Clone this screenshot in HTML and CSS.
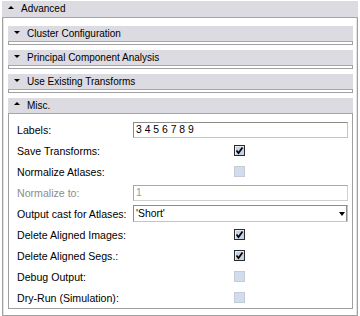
FILE: index.html
```html
<!DOCTYPE html>
<html>
<head>
<meta charset="utf-8">
<link rel="stylesheet" href="styles.css">
</head>
<body>
<div class="section outer">
  <div class="hdr"><span class="tri up"></span><span>Advanced</span></div>
  <div class="outer-body">
    <div class="sub">
      <div class="hdr sub-hdr"><span class="tri down"></span><span>Cluster Configuration</span></div>
      <div class="collapsed"></div>
    </div>
    <div class="sub">
      <div class="hdr sub-hdr"><span class="tri down"></span><span>Principal Component Analysis</span></div>
      <div class="collapsed"></div>
    </div>
    <div class="sub">
      <div class="hdr sub-hdr"><span class="tri down"></span><span>Use Existing Transforms</span></div>
      <div class="collapsed"></div>
    </div>
    <div class="sub last">
      <div class="hdr sub-hdr"><span class="tri up"></span><span>Misc.</span></div>
      <div class="misc-body">
        <div class="row"><span class="lbl">Labels:</span><div class="ctl"><div class="input">3 4 5 6 7 8 9</div></div></div>
        <div class="row"><span class="lbl">Save Transforms:</span><div class="ctl center"><span class="cb checked"><svg viewBox="0 0 11 11" width="11" height="11"><path d="M2.5 5.5 L4.5 8 L8.5 2.5" fill="none" stroke="#000" stroke-width="1.7"/></svg></span></div></div>
        <div class="row"><span class="lbl">Normalize Atlases:</span><div class="ctl center"><span class="cb off"></span></div></div>
        <div class="row"><span class="lbl dis">Normalize to:</span><div class="ctl"><div class="input disabled">1</div></div></div>
        <div class="row"><span class="lbl">Output cast for Atlases:</span><div class="ctl"><div class="select"><span class="sel-val">'Short'</span><span class="sel-btn"><span class="tri down small"></span></span></div></div></div>
        <div class="row"><span class="lbl">Delete Aligned Images:</span><div class="ctl center"><span class="cb checked"><svg viewBox="0 0 11 11" width="11" height="11"><path d="M2.5 5.5 L4.5 8 L8.5 2.5" fill="none" stroke="#000" stroke-width="1.7"/></svg></span></div></div>
        <div class="row"><span class="lbl">Delete Aligned Segs.:</span><div class="ctl center"><span class="cb checked"><svg viewBox="0 0 11 11" width="11" height="11"><path d="M2.5 5.5 L4.5 8 L8.5 2.5" fill="none" stroke="#000" stroke-width="1.7"/></svg></span></div></div>
        <div class="row"><span class="lbl">Debug Output:</span><div class="ctl center"><span class="cb off"></span></div></div>
        <div class="row"><span class="lbl">Dry-Run (Simulation):</span><div class="ctl center"><span class="cb off"></span></div></div>
      </div>
    </div>
  </div>
</div>
</body>
</html>
```
FILE: styles.css
```css
html, body {
  margin: 0;
  padding: 0;
  background: #ffffff;
}
body {
  font-family: "Liberation Sans", Arial, sans-serif;
  color: #000;
  width: 360px;
  height: 316px;
  overflow: hidden;
}
.section.outer {
  margin: 1px 2px 0 2px;
}
.hdr {
  height: 16px;
  background: #dcdbe1;
  border-bottom: 1px solid #a6a6aa;
  display: flex;
  align-items: center;
  font-size: 10px;
  line-height: 16px;
  white-space: nowrap;
}
.sub-hdr {
  height: 15px;
  line-height: 15px;
}
.tri {
  width: 0;
  height: 0;
  margin-left: 6px;
  margin-right: 7px;
  border-left: 3px solid transparent;
  border-right: 3px solid transparent;
}
.tri.up {
  border-bottom: 3px solid #000;
  margin-top: -4px;
}
.tri.down {
  border-top: 3px solid #000;
  margin-top: -3px;
}
.tri.small {
  margin: 0;
  border-left-width: 3px;
  border-right-width: 3px;
  border-top-width: 4px;
}
.outer-body {
  border: 1px solid #a0a0a0;
  border-top: none;
  padding: 8px 4px 6px 5px;
  box-shadow: inset 1px 0 0 #e4e4e4, inset -1px 0 0 #e4e4e4;
}
.sub {
  margin-bottom: 5px;
}
.sub.last {
  margin-bottom: 0;
}
.collapsed {
  height: 2px;
  border: 1px solid #a0a0a0;
  border-top: none;
}
.misc-body {
  border: 1px solid #a0a0a0;
  border-top: none;
  padding: 5px 4px 0 8px;
}
.row {
  display: grid;
  grid-template-columns: 116px 1fr;
  height: 21px;
  align-items: center;
}
.lbl {
  font-size: 10.6px;
  white-space: nowrap;
}
.lbl.dis {
  color: #8c8c8c;
}
.ctl {
  display: flex;
  align-items: center;
}
.ctl.center {
  justify-content: center;
}
.input {
  box-sizing: border-box;
  width: 100%;
  height: 16px;
  border: 1px solid #c4c4c4;
  border-top-color: #8c8c8c;
  border-left-color: #8c8c8c;
  background: #fff;
  font-size: 10.4px;
  line-height: 14px;
  padding-left: 2px;
  white-space: nowrap;
}
.input.disabled {
  color: #9a9a9a;
  border-color: #d0d0d0;
  border-top-color: #a8a8a8;
  border-left-color: #a8a8a8;
}
.select {
  box-sizing: border-box;
  width: 100%;
  height: 17px;
  border: 1px solid #c4c4c4;
  border-top-color: #8c8c8c;
  border-left-color: #8c8c8c;
  background: #fff;
  display: flex;
  align-items: center;
  font-size: 10.4px;
}
.sel-val {
  flex: 1;
  padding-left: 2px;
}
.sel-btn {
  width: 10px;
  height: 15px;
  box-sizing: border-box;
  border-right: 1px solid #8c8c8c;
  display: flex;
  align-items: center;
  justify-content: center;
}
.cb {
  display: block;
  box-sizing: border-box;
  width: 11px;
  height: 11px;
  margin-right: 3px;
}
.cb svg {
  display: block;
  margin: -1px;
}
.cb.checked {
  border: 1px solid #2a2a2a;
  background: #c6d2e2;
  box-shadow: inset 1px 1px 0 #e8eef6;
}
.cb.off {
  border: 1px solid #c4ccd8;
  background: #d2dcea;
}
```
